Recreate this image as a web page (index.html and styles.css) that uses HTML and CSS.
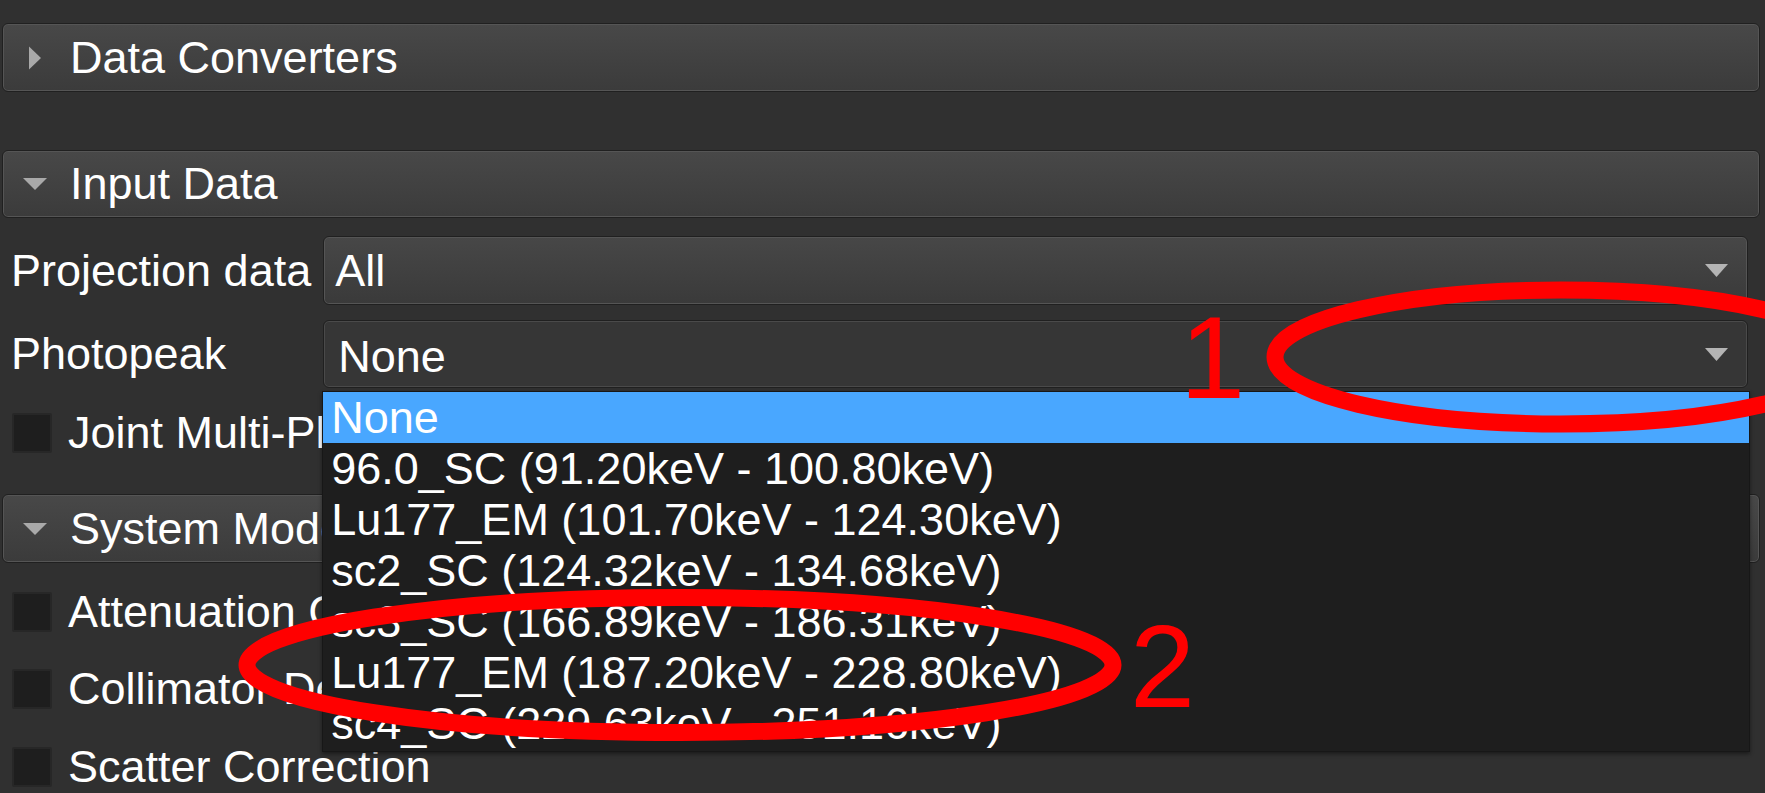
FILE: index.html
```html
<!DOCTYPE html>
<html>
<head>
<meta charset="utf-8">
<link rel="stylesheet" href="styles.css">
</head>
<body>
<div class="panel">
  <div class="group-header">
    <svg class="tri" viewBox="0 0 24 24"><polygon points="6,0.5 18,12 6,23.5"/></svg>
    <span>Data Converters</span>
  </div>

  <div class="group-header input-header">
    <svg class="tri" viewBox="0 0 24 24"><polygon points="0,6 24,6 12,18"/></svg>
    <span>Input Data</span>
  </div>

  <div class="form">
    <div class="form-label">Projection data</div>
    <div class="combo">
      <span>All</span>
      <svg class="arrow" viewBox="0 0 23 13"><polygon points="0,0 23,0 11.5,13"/></svg>
    </div>
    <div class="form-label">Photopeak</div>
    <div class="combo-wrap">
      <div class="combo open">
        <span class="combo-text">None</span>
        <svg class="arrow" viewBox="0 0 23 13"><polygon points="0,0 23,0 11.5,13"/></svg>
      </div>
      <ul class="popup">
        <li class="selected">None</li>
        <li>96.0_SC (91.20keV - 100.80keV)</li>
        <li>Lu177_EM (101.70keV - 124.30keV)</li>
        <li>sc2_SC (124.32keV - 134.68keV)</li>
        <li>sc3_SC (166.89keV - 186.31keV)</li>
        <li>Lu177_EM (187.20keV - 228.80keV)</li>
        <li>sc4_SC (229.63keV - 251.16keV)</li>
      </ul>
    </div>
  </div>

  <div class="check-row joint"><span class="box"></span><span>Joint Multi-Photopeak Reconstruction</span></div>

  <div class="group-header system-header">
    <svg class="tri" viewBox="0 0 24 24"><polygon points="0,6 24,6 12,18"/></svg>
    <span>System Modeling</span>
  </div>

  <div class="check-row atten"><span class="box"></span><span>Attenuation Correction</span></div>
  <div class="check-row colli"><span class="box"></span><span>Collimator Detector Response</span></div>
  <div class="check-row scatter"><span class="box"></span><span>Scatter Correction</span></div>
</div>

<svg class="annotations" width="1765" height="793" viewBox="0 0 1765 793">
  <ellipse cx="1561" cy="357" rx="286" ry="67" />
  <ellipse cx="680" cy="665" rx="433" ry="67.5" />
  <text x="1180" y="398">1</text>
  <text x="1130" y="707">2</text>
</svg>
</body>
</html>
```

FILE: styles.css
```css
* {
  box-sizing: border-box;
}

html,
body {
  margin: 0;
  padding: 0;
  background: #303030;
}

body {
  width: 1765px;
  height: 793px;
  overflow: hidden;
  position: relative;
  font-family: "Liberation Sans", Arial, sans-serif;
  font-size: 45px;
  color: #ffffff;
}

.panel {
  margin-left: 2px;
  width: 1758px;
  padding-top: 23px;
}

.group-header {
  height: 69px;
  display: flex;
  align-items: center;
  padding-left: 20px;
  border: 1px solid #202020;
  border-radius: 6px;
  background: linear-gradient(#484848, #3b3b3b);
  box-shadow: inset 0 0 0 1px #555555;
  white-space: nowrap;
}

.tri {
  width: 24px;
  height: 24px;
  margin-right: 23px;
  flex: none;
  fill: #a9a9a9;
}

.input-header {
  margin-top: 58px;
  height: 68px;
}

.form {
  display: grid;
  grid-template-columns: auto 1fr;
  column-gap: 12px;
  row-gap: 15px;
  align-items: center;
  padding: 18px 12px 0 9px;
}

.form-label {
  white-space: nowrap;
}

.combo {
  height: 69px;
  display: flex;
  align-items: center;
  justify-content: space-between;
  padding: 0 19px 0 11px;
  border: 1px solid #202020;
  border-radius: 6px;
  background: linear-gradient(#474747, #3a3a3a);
  box-shadow: inset 0 0 0 1px #555555;
}

.combo.open {
  height: 68px;
  background: #363636;
  box-shadow: inset 0 0 0 1px #4a4a4a;
}

.combo-text {
  padding-top: 5px;
  padding-left: 3px;
}

.arrow {
  width: 23px;
  height: 13px;
  fill: #b4b4b4;
  flex: none;
}

.combo-wrap {
  position: relative;
}

.popup {
  position: absolute;
  left: -1px;
  top: calc(100% + 3px);
  width: 1428px;
  height: 361px;
  margin: 0;
  padding: 0 0 2px 0;
  list-style: none;
  background: #1e1e1e;
  border: 1px solid #171717;
  box-shadow: 0 2px 4px rgba(0, 0, 0, 0.45);
  z-index: 10;
}

.popup li {
  height: 51px;
  line-height: 51px;
  padding-left: 8px;
  white-space: nowrap;
}

.popup li.selected {
  background: #49a7ff;
}

.check-row {
  display: flex;
  align-items: center;
  height: 40px;
  padding-left: 10px;
  white-space: nowrap;
}

.box {
  width: 40px;
  height: 40px;
  flex: none;
  margin-right: 16px;
  background: #1e1e1e;
  border: 2px solid #272727;
  border-radius: 2px;
}

.joint {
  margin-top: 25px;
}

.system-header {
  margin-top: 41px;
}

.atten {
  margin-top: 29px;
}

.colli {
  margin-top: 37px;
}

.scatter {
  margin-top: 38px;
}

.annotations {
  position: absolute;
  left: 0;
  top: 0;
  z-index: 20;
  pointer-events: none;
}

.annotations ellipse {
  fill: none;
  stroke: #ff0000;
  stroke-width: 17;
}

.annotations text {
  font-family: "Liberation Sans", Arial, sans-serif;
  font-size: 117px;
  fill: #ff0000;
}
```
